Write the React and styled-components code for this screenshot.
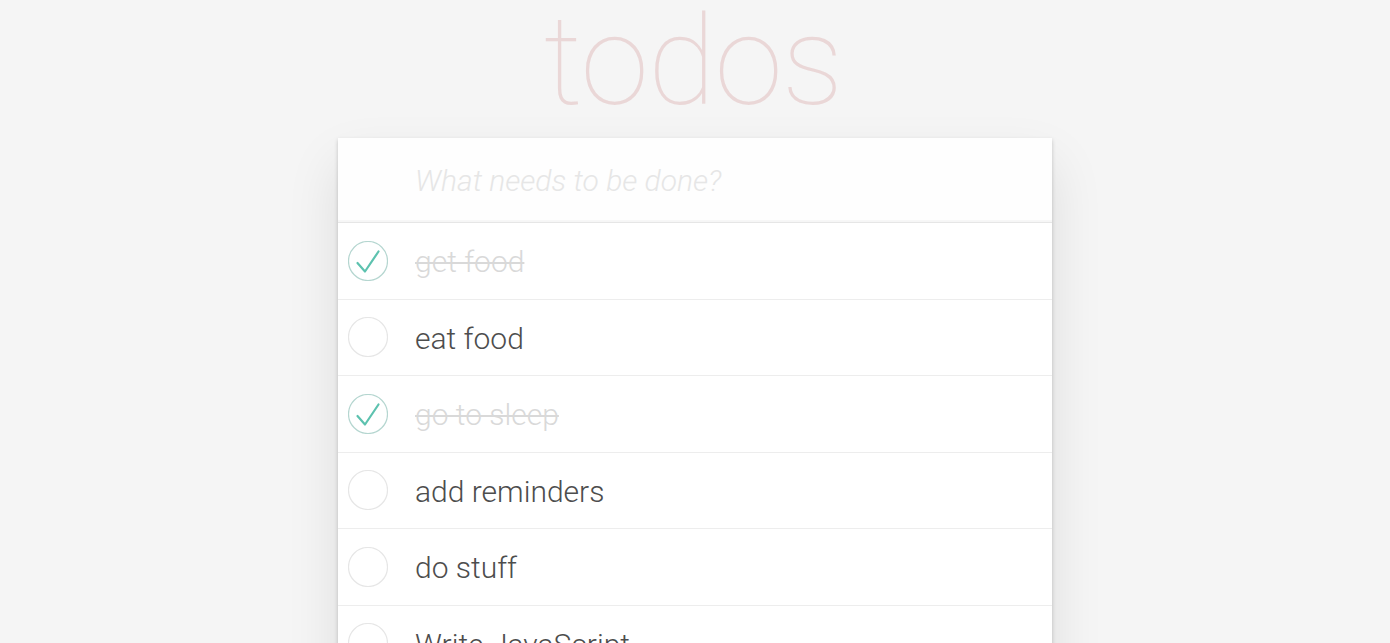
import React, { useState } from "react";
import styled, { createGlobalStyle } from "styled-components";

const GlobalStyle = createGlobalStyle`
  html, body {
    margin: 0;
    padding: 0;
  }
  body {
    background: #f5f5f5;
    font-family: "Helvetica Neue", Roboto, "Liberation Sans", Arial, sans-serif;
    font-weight: 300;
    color: #4d4d4d;
    -webkit-font-smoothing: antialiased;
  }
`;

const Page = styled.div`
  display: flex;
  flex-direction: column;
  align-items: center;
  min-height: 100vh;
`;

const Title = styled.h1`
  margin: 0;
  height: 138px;
  font-size: 124px;
  font-weight: 100;
  line-height: 124px;
  color: rgba(175, 47, 47, 0.15);
  text-align: center;
  letter-spacing: -1px;
  text-indent: -4px;
`;

const Panel = styled.section`
  width: 714px;
  background: #fff;
  box-shadow: 0 2px 4px rgba(0, 0, 0, 0.2), 0 25px 50px rgba(0, 0, 0, 0.1);
`;

const NewTodo = styled.input`
  display: block;
  box-sizing: border-box;
  width: 100%;
  height: 84px;
  margin: 0;
  padding: 0 20px 0 77px;
  border: none;
  outline: none;
  background: rgba(0, 0, 0, 0.003);
  box-shadow: inset 0 -2px 1px rgba(0, 0, 0, 0.03);
  font-family: inherit;
  font-size: 30px;
  font-weight: 300;
  color: #4d4d4d;

  &::placeholder {
    font-style: italic;
    color: #e6e6e6;
  }
`;

const List = styled.ul`
  margin: 0;
  padding: 0;
  list-style: none;
  border-top: 1px solid #e6e6e6;
`;

const Item = styled.li`
  display: flex;
  align-items: center;
  height: 75.5px;
  padding-left: 10px;
  border-bottom: 1px solid #ededed;
`;

const Toggle = styled.button`
  flex: none;
  width: 40px;
  height: 40px;
  padding: 0;
  border: none;
  background: none;
  cursor: pointer;
  svg {
    display: block;
  }
`;

const Label = styled.label`
  margin-left: 27px;
  padding-top: 3px;
  font-size: 30px;
  font-weight: 300;
  line-height: 1.2;
  color: ${(p) => (p.$done ? "#d9d9d9" : "#4d4d4d")};
  text-decoration: ${(p) => (p.$done ? "line-through" : "none")};
  text-decoration-thickness: 2px;
`;

const Footer = styled.footer`
  display: flex;
  align-items: center;
  justify-content: space-between;
  height: 52px;
  padding: 0 20px;
  font-size: 18px;
  color: #777;
`;

function CheckIcon({ done }) {
  return (
    <svg width="40" height="40" viewBox="0 0 40 40">
      <circle
        cx="20"
        cy="20"
        r="19.5"
        fill="none"
        stroke={done ? "#b5d6d0" : "#e6e6e6"}
        strokeWidth="1.2"
      />
      {done && (
        <polyline
          points="9.5,22 17,30.5 30.5,10.5"
          fill="none"
          stroke="#5dc2af"
          strokeWidth="2.2"
          strokeLinecap="round"
          strokeLinejoin="round"
        />
      )}
    </svg>
  );
}

const initialTodos = [
  { id: 1, title: "get food", done: true },
  { id: 2, title: "eat food", done: false },
  { id: 3, title: "go to sleep", done: true },
  { id: 4, title: "add reminders", done: false },
  { id: 5, title: "do stuff", done: false },
  { id: 6, title: "Write JavaScript", done: false },
];

export default function App() {
  const [todos, setTodos] = useState(initialTodos);

  const toggle = (id) => {
    setTodos(todos.map((t) => (t.id === id ? { ...t, done: !t.done } : t)));
  };

  const left = todos.filter((t) => !t.done).length;

  return (
    <>
      <GlobalStyle />
      <Page>
        <Title>todos</Title>
        <Panel>
          <NewTodo placeholder="What needs to be done?" />
          <List>
            {todos.map((t) => (
              <Item key={t.id}>
                <Toggle onClick={() => toggle(t.id)}>
                  <CheckIcon done={t.done} />
                </Toggle>
                <Label $done={t.done}>{t.title}</Label>
              </Item>
            ))}
          </List>
          <Footer>
            <span>{left} items left</span>
          </Footer>
        </Panel>
      </Page>
    </>
  );
}
